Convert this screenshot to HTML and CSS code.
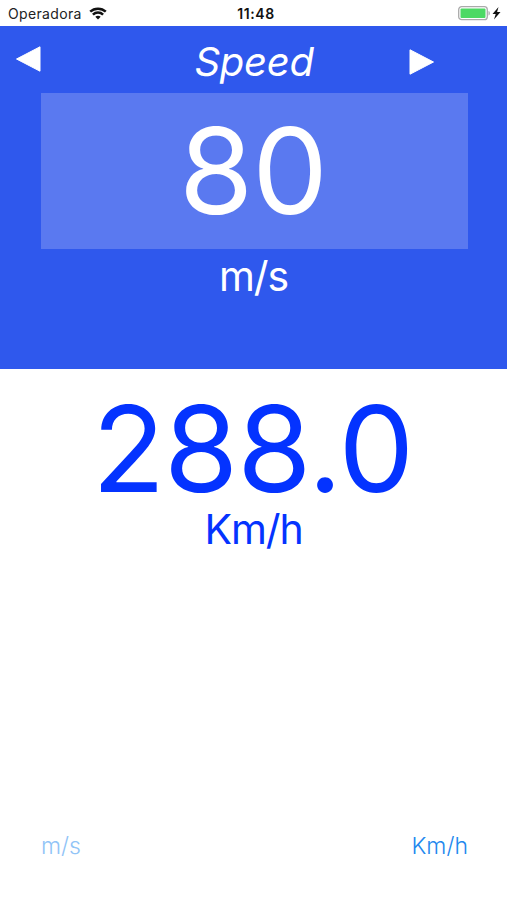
FILE: index.html
```html
<!DOCTYPE html>
<html lang="en">
<head>
<meta charset="utf-8">
<title>Speed</title>
<link rel="stylesheet" href="styles.css">
</head>
<body>
<header class="status">
  <div class="carrier"><span class="carrier-name">Operadora</span>
    <svg class="wifi" width="18" height="13" viewBox="0 0 18 13"><g fill="none" stroke="#111" stroke-width="2.500"><path d="M1.200 4.700C5.500.600 12.500.600 16.800 4.700"/><path d="M3.900 7.700c2.900-2.800 7.300-2.800 10.200 0"/></g><path d="M9 12.500l-2.700-2.700c1.500-1.400 3.900-1.400 5.400 0z" fill="#111"/></svg>
  </div>
  <div class="clock">11:48</div>
  <svg class="battery" width="44" height="15" viewBox="0 0 44 15"><rect x=".7" y=".7" width="28.600" height="13" rx="3" fill="#fff" stroke="#aaa" stroke-width="1.300"/><rect x="2.500" y="2.500" width="25" height="9.500" rx="1" fill="#4cd964"/><path d="M30.500 5c1.800.5 1.800 4 0 4.500z" fill="#aaa"/><path d="M40.500 1l-6 7h3.200l-1.700 5.500 6.500-7.500h-3.400z" fill="#111"/></svg>
</header>
<section class="source">
  <nav class="picker">
    <svg class="arrow" width="26" height="28" viewBox="0 0 26 28"><path d="M1.500 14L25 1.800v24.400z" fill="#fff" stroke="#fff" stroke-linejoin="round"/></svg>
    <h1 class="title">Speed</h1>
    <svg class="arrow next" width="26" height="28" viewBox="0 0 26 28"><path d="M24.500 14L1 1.800v24.400z" fill="#fff" stroke="#fff" stroke-linejoin="round"/></svg>
  </nav>
  <div class="field"><div class="amount">80</div></div>
  <div class="unit">m/s</div>
</section>
<main class="result">
  <div class="amount">288.0</div>
  <div class="unit">Km/h</div>
</main>
<footer class="choices"><span class="choice from">m/s</span><span class="choice">Km/h</span></footer>
</body>
</html>
```
FILE: styles.css
```css
* { box-sizing: border-box; }
body { margin: 0; height: 900px; display: flex; flex-direction: column; overflow: hidden; background: #fff; font-family: Inter, sans-serif; }
.status { height: 26px; display: grid; grid-template-columns: 1fr auto 1fr; align-items: center; padding: 1px 5px 0 8px; color: #222; font-size: 14px; }
.carrier { display: flex; align-items: center; gap: 7px; }
.carrier-name { letter-spacing: .35px; }
.clock { padding-left: 2px; font-weight: 600; font-size: 14px; letter-spacing: .6px; color: #111; }
.battery { justify-self: end; margin-top: -1px; }
.source { height: 343px; background: #2f58ed; color: #fff; text-align: center; }
.picker { height: 67px; display: grid; grid-template-columns: 42px 1fr 98px; padding-top: 19px; }
.arrow { margin-left: 15px; }
.next { margin-left: 0; margin-top: 3px; }
.title { margin: -5px 0 0 57px; font-size: 40px; line-height: 44px; font-style: italic; font-weight: 400; letter-spacing: -.3px; }
.field { height: 156px; margin: 0 39px 0 41px; padding: 18px 3px 0 0; background: #5a79f0; }
.amount { font-size: 120px; line-height: 120px; font-weight: 400; letter-spacing: -1px; }
.unit { font-size: 41px; line-height: 54px; font-weight: 400; letter-spacing: -1.100px; text-align: center; }
.result { flex: 1; padding-top: 20px; color: #0433ff; text-align: center; }
.result .amount { padding-right: 2px; }
.result .unit { line-height: 40px; }
.choices { height: 76px; padding: 7px 39px 0 41px; display: flex; justify-content: space-between; font-size: 23px; line-height: 30px; font-weight: 300; color: #2388ee; }
.from { color: #91c4f7; }
```
